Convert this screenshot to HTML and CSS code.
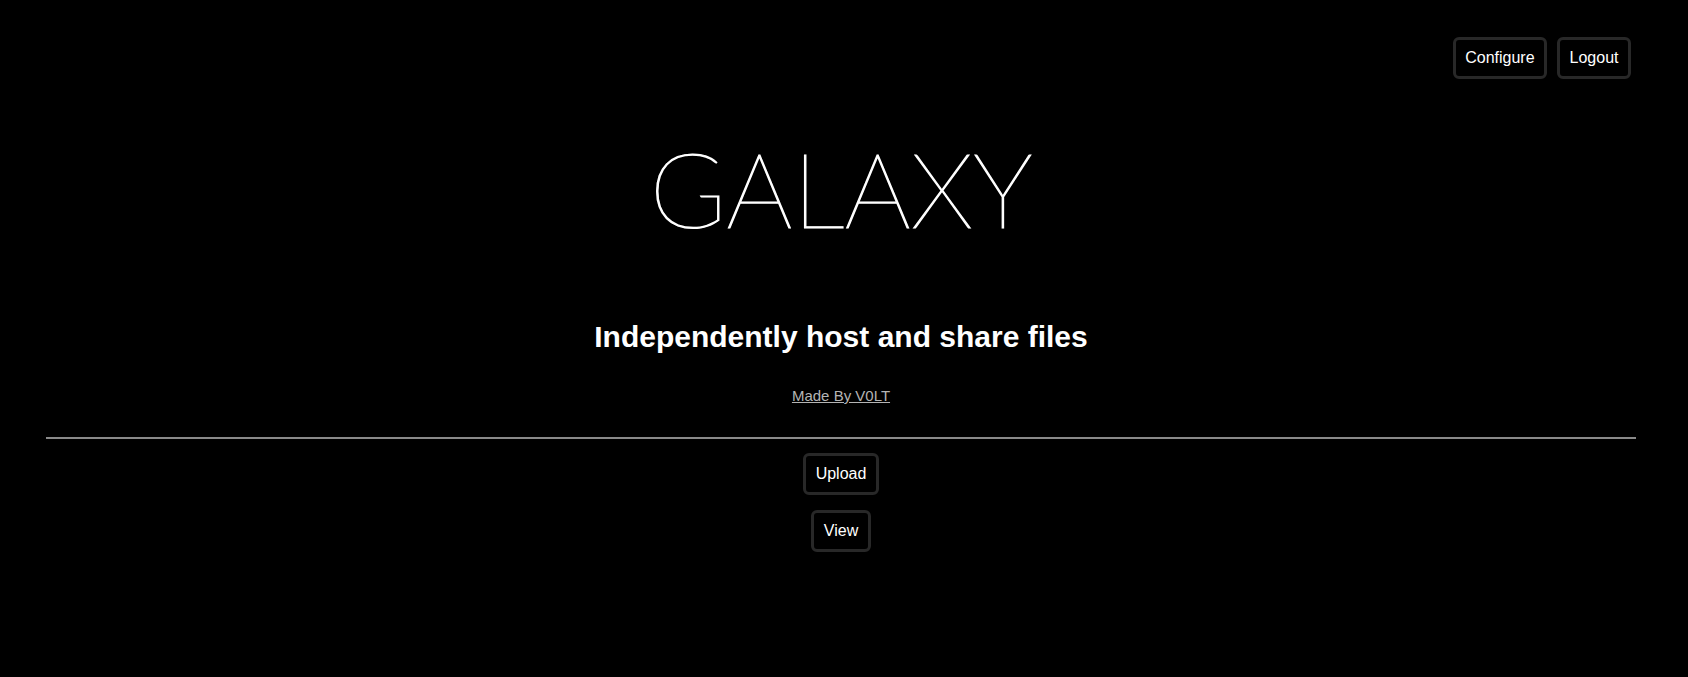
FILE: index.html
```html
<!DOCTYPE html>
<html lang="en">
<head>
    <meta charset="UTF-8">
    <meta name="viewport" content="width=device-width, initial-scale=1.0">
    <title>Galaxy</title>
    <link rel="stylesheet" href="styles.css">
</head>
<body>
    <div class="topbar">
        <a class="button" href="#">Configure</a>
        <a class="button" href="#">Logout</a>
    </div>

    <main class="content">
        <h1 class="logo">GALAXY</h1>
        <h2 class="tagline">Independently host and share files</h2>
        <p class="credit"><a href="#">Made By V0LT</a></p>

        <hr>

        <div class="actions">
            <a class="button" href="#">Upload</a>
            <a class="button" href="#">View</a>
        </div>
    </main>
</body>
</html>
```

FILE: styles.css
```css
body {
    margin: 0;
    background: #000;
    color: #fff;
    font-family: "Liberation Sans", Arial, sans-serif;
}
.topbar {
    display: flex;
    justify-content: flex-end;
    gap: 10px;
    padding: 37px 57px 0;
}
.button {
    display: inline-block;
    font-size: 16px;
    color: #fff;
    text-decoration: none;
    background: #000;
    padding: 9px 9.5px;
    border: 3px solid #282828;
    border-radius: 6px;
}
.content {
    padding: 0 52px 0 46px;
    text-align: center;
}
.logo {
    margin: 46px 0 0;
    font-family: Lato, sans-serif;
    font-weight: 100;
    font-size: 104px;
    line-height: normal;
    -webkit-text-stroke: 1.2px #fff;
}
.tagline {
    margin: 70px 0 0;
    font-size: 30px;
    font-weight: bold;
}
.credit {
    margin: 33px 0 0;
    font-size: 15px;
}
.credit a { color: #b4b4b4; }
hr {
    margin: 33px 0 14px;
    border: none;
    border-top: 2px solid #8a8a8a;
}
.actions {
    display: flex;
    flex-direction: column;
    align-items: center;
    gap: 15px;
}
```
